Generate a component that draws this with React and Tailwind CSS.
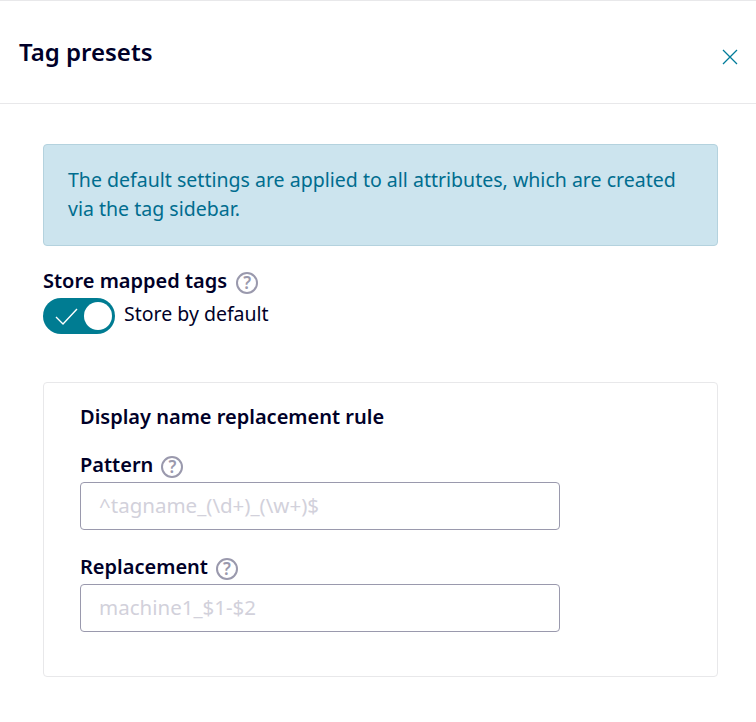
import React from 'react';

function HelpIcon() {
  return (
    <span className="flex h-[22px] w-[22px] items-center justify-center rounded-full border-2 border-[#9a99ad] text-[17px] font-semibold leading-none text-[#9a99ad]">
      ?
    </span>
  );
}

function Field({ label, placeholder }) {
  return (
    <div className="flex flex-col">
      <div className="flex h-[28px] items-center gap-[8px]">
        <span className="text-[20px] font-semibold text-[#000028]">{label}</span>
        <span className="mt-[3px]"><HelpIcon /></span>
      </div>
      <input
        readOnly
        placeholder={placeholder}
        className="mt-[3px] h-[48px] w-[480px] rounded-[4px] border border-[#9a99ad] bg-white px-[18px] pb-[2px] text-[20.5px] text-[#000028] outline-none placeholder:text-[#d2d1db]"
      />
    </div>
  );
}

export default function App() {
  return (
    <div className="h-[722px] w-[756px] overflow-hidden border-t border-[#e8e8ea] bg-white font-['Noto_Sans',sans-serif]">
      <header className="flex h-[103px] items-center justify-between border-b border-[#e8e8ea] pl-[19px] pr-[18px]">
        <h1 className="text-[24px] font-semibold text-[#000028]">Tag presets</h1>
        <button className="mt-[9px] text-[#007c9a]">
          <svg width="16" height="16" viewBox="0 0 16 16" fill="none" stroke="currentColor" strokeWidth="1.3">
            <path d="M1 1l14 14M15 1L1 15" />
          </svg>
        </button>
      </header>

      <main className="pl-[43px] pr-[38px] pt-[40px]">
        <div className="rounded-[4px] border border-[#b4d2de] bg-[#cce4ee] px-[24px] pb-[22px] pt-[20px] text-[19.55px] leading-[29px] text-[#006d8f]">
          The default settings are applied to all attributes, which are created via the tag sidebar.
        </div>

        <div className="mt-[21px] flex items-center gap-[9px]">
          <span className="text-[20px] font-semibold leading-[28px] text-[#000028]">Store mapped tags</span>
          <span className="mt-[3px]"><HelpIcon /></span>
        </div>

        <div className="mt-[3px] flex items-center gap-[9px]">
          <div className="flex h-[36px] w-[72px] items-center justify-between rounded-full bg-[#007c92] pl-[12px] pr-[3px]">
            <svg width="24" height="20" viewBox="0 0 24 20" fill="none" stroke="white" strokeWidth="1.4">
              <path d="M1 11l7 7L22 3" />
            </svg>
            <span className="h-[28px] w-[28px] rounded-full bg-white" />
          </div>
          <span className="mb-[5px] text-[19.5px] text-[#000028]">Store by default</span>
        </div>

        <section className="mt-[48px] flex h-[295px] flex-col rounded-[4px] border border-[#e8e8ea] pl-[36px] pt-[20px]">
          <h2 className="text-[20px] font-semibold leading-[28px] text-[#000028]">Display name replacement rule</h2>
          <div className="mt-[20px] flex flex-col gap-[23px]">
            <Field label="Pattern" placeholder="^tagname_(\d+)_(\w+)$" />
            <Field label="Replacement" placeholder="machine1_$1-$2" />
          </div>
        </section>
      </main>
    </div>
  );
}
